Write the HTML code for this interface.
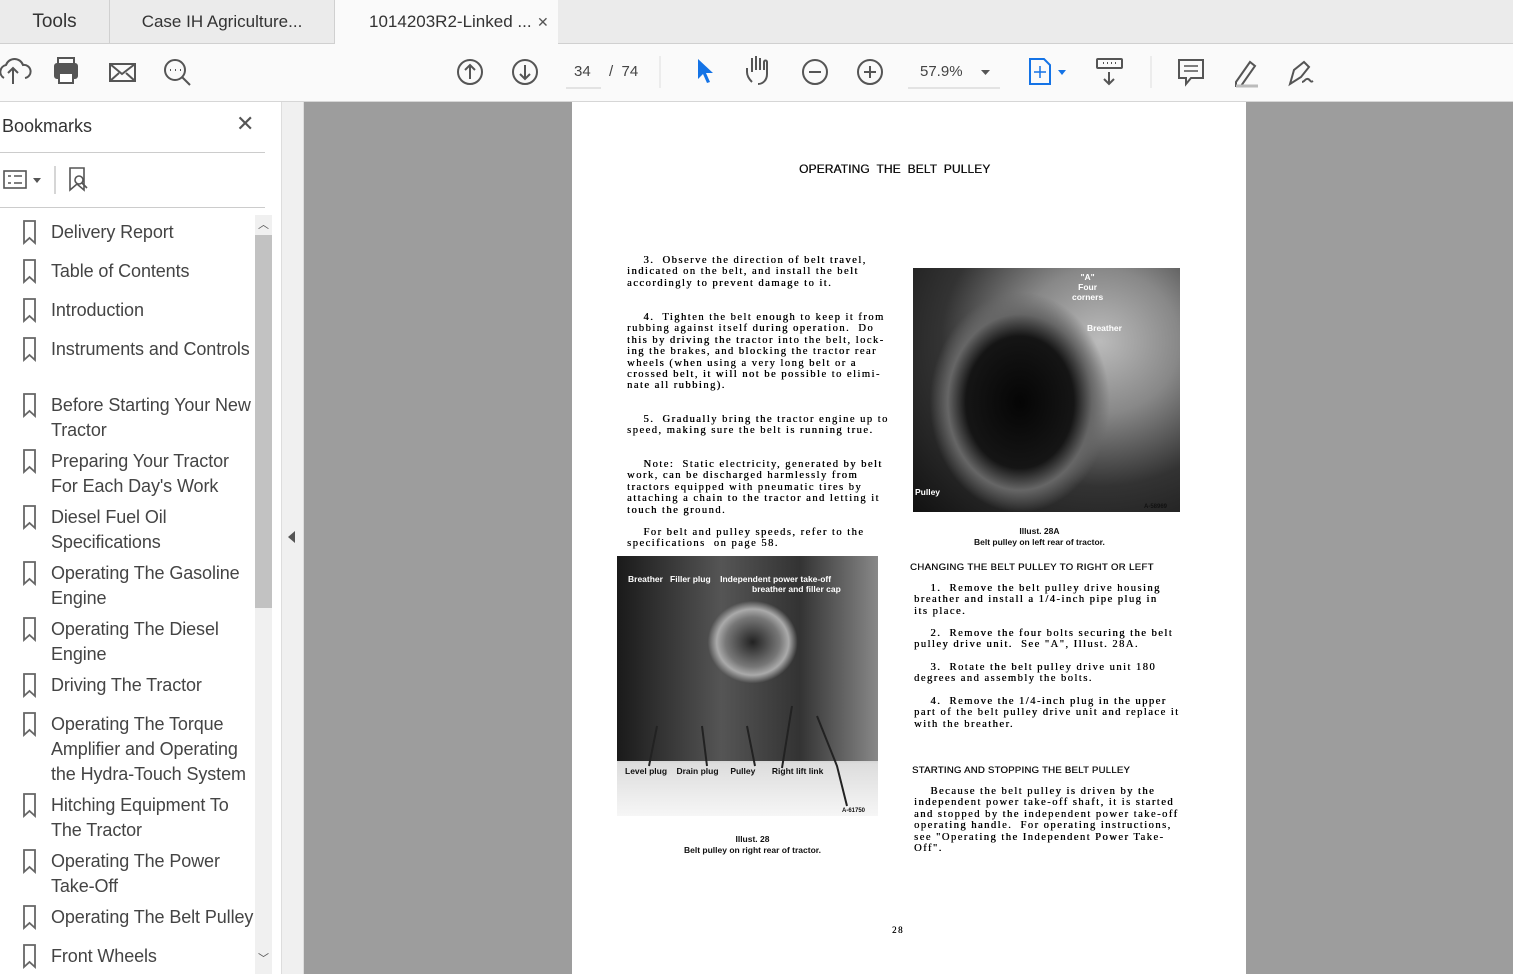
<!DOCTYPE html>
<html><head><meta charset="utf-8"><style>
*{margin:0;padding:0;box-sizing:border-box}
html,body{width:1513px;height:974px;overflow:hidden}
body{background:#9d9d9d;font-family:"Liberation Sans",sans-serif;position:relative}
.abs{position:absolute}
.tabs{left:0;top:0;width:1513px;height:44px;background:#ebebeb;border-bottom:1px solid #d0d0d0}
.tab{position:absolute;top:0;height:44px;font-size:17px;color:#333;line-height:44px}
.tb{left:0;top:44px;width:1513px;height:58px;background:#fafafa;border-bottom:1px solid #d6d6d6}
.side{left:0;top:102px;width:281px;height:872px;background:#fff;overflow:hidden}
.split{left:281px;top:102px;width:23px;height:872px;background:#f0f0f0;border-left:1px solid #ddd;border-right:1px solid #ddd}
.bm{position:absolute;left:51px;font-size:18px;color:#444;line-height:25px;letter-spacing:-.1px}
.page{left:572px;top:102px;width:674px;height:872px;background:#fff;overflow:hidden}
.t{position:absolute;font-family:"Liberation Serif",serif;font-size:10.6px;line-height:11.4px;color:#000;letter-spacing:1.45px;white-space:pre;text-shadow:0.3px 0 0 #000}
.s{position:absolute;font-family:"Liberation Sans",sans-serif;font-size:8.5px;font-weight:bold;color:#111;white-space:pre}
.photo{position:absolute}
</style></head><body>
<div class="abs tabs">
 <div class="tab" style="left:0;width:110px;text-align:center;border-right:1px solid #d0d0d0;font-size:19px">Tools</div>
 <div class="tab" style="left:110px;width:225px;text-align:center;border-right:1px solid #d0d0d0">Case IH Agriculture...</div>
 <div class="tab" style="left:335px;width:223px;background:#fafafa;height:45px;padding-left:34px">1014203R2-Linked ...</div>
 <div class="tab" style="left:537px;font-size:14px;color:#555">✕</div>
</div>
<div class="abs tb">
<svg width="1513" height="58" fill="none" stroke="#555" stroke-width="2">
 <path d="M4 34a7 7 0 0 1 2-13a9 9 0 0 1 17 0a6 6 0 0 1 2 13M13 40V24m-5 5l5-5 5 5"/>
 <rect x="55" y="20" width="22" height="14" rx="2" fill="#555"/><rect x="58" y="14" width="16" height="6"/><rect x="59" y="29" width="14" height="10" fill="#fff"/>
 <rect x="110" y="20" width="25" height="17"/><path d="M110 20l12 10 13-10M110 37l9-8M135 37l-9-8"/>
 <circle cx="175" cy="26" r="10"/><path d="M182 33l8 8"/><path d="M170 26h1M175 26h1M180 26h1" stroke-width="2"/>
 <circle cx="470" cy="28" r="12"/><path d="M470 35V21m-5 5l5-5 5 5"/>
 <circle cx="525" cy="28" r="12"/><path d="M525 21v14m-5-5l5 5 5-5"/>
 <path d="M566 44h35" stroke="#ccc" stroke-width="1"/>
 <path d="M660 12v32" stroke="#ddd" stroke-width="1"/>
 <path d="M698 15l0 20 5-5 4 9 3-1-4-9 7 0z" fill="#1473e6" stroke="none"/>
 <path d="M752 38c-4-4-5-8-5-10v-4m5 4V14m4 12V12m4 14V14m4 12v-8c0-2 3-2 3 0v12c0 6-4 10-9 10"/>
 <circle cx="815" cy="28" r="12"/><path d="M809 28h12"/>
 <circle cx="870" cy="28" r="12"/><path d="M864 28h12m-6-6v12"/>
 <path d="M908 44h92" stroke="#ccc" stroke-width="1"/>
 <path d="M981 26h9l-4.5 5z" fill="#555" stroke="none"/>
 <path d="M1030 15h14l6 6v19h-20z" stroke="#1473e6"/><path d="M1040 22v12m-6-6h12" stroke="#1473e6" stroke-width="1.5"/>
 <path d="M1058 26h8l-4 5z" fill="#1473e6" stroke="none"/>
 <rect x="1097" y="15" width="25" height="9" rx="1"/><path d="M1103 19h1M1107 19h1M1111 19h1M1115 19h1"/><path d="M1109 28v12m-5-5l5 5 5-5"/>
 <path d="M1151 12v32" stroke="#ddd" stroke-width="1"/>
 <path d="M1179 16h24v18h-12l-5 6v-6h-7z"/><path d="M1184 22h14M1184 27h14" stroke-width="1.5"/>
 <path d="M1236 38l14-20 5 4-14 20h-5z"/><path d="M1236 42h22" stroke="#bbb" stroke-width="3"/>
 <path d="M1290 40l4-14 10-8 5 5-8 10-11 7z"/><path d="M1302 38c3 0 3-4 6-3s2 4 5 2"/>
</svg>
<div class="abs" style="left:574px;top:19px;font-size:15px;color:#444">34</div>
<div class="abs" style="left:609px;top:19px;font-size:15px;color:#444">/ &nbsp;74</div>
<div class="abs" style="left:920px;top:19px;font-size:15px;color:#444">57.9%</div>
</div>
<div class="abs side">
 <div class="abs" style="left:2px;top:14px;font-size:18px;color:#333">Bookmarks</div>
 <div class="abs" style="left:236px;top:9px;font-size:22px;color:#555">✕</div>
 <div class="abs" style="left:0;top:50px;width:265px;height:1px;background:#ccc"></div>
 <svg class="abs" style="left:0;top:62px" width="100" height="32" fill="none" stroke="#555" stroke-width="1.6"><rect x="4" y="7" width="22" height="17"/><path d="M8 12h3M8 19h3M14 12h8M14 19h8"/><path d="M33 14h8l-4 5z" fill="#555" stroke="none"/><path d="M55 2v28" stroke="#ccc"/><path d="M70 4h14v22l-7-6-7 6z"/><circle cx="79" cy="16" r="4"/><path d="M82 19l5 5"/></svg>
 <div class="abs" style="left:0;top:105px;width:265px;height:1px;background:#ccc"></div>
 <div class="abs" style="left:255px;top:113px;width:17px;height:759px;background:#f0f0f0"></div>
 <div class="abs" style="left:255px;top:133px;width:17px;height:373px;background:#c2c2c2"></div>
 <div class="abs" style="left:258px;top:114px;font-size:11px;color:#555">︿</div>
 <div class="abs" style="left:258px;top:848px;font-size:11px;color:#555">﹀</div>
</div>
<svg class="abs" style="left:20px;top:220px" width="20" height="754" fill="none" stroke="#666" stroke-width="1.8">
<g id="b"><path d="M4 1h11v22l-5.5-5-5.5 5z"/></g>
<use href="#b" y="39"/><use href="#b" y="78"/><use href="#b" y="117"/><use href="#b" y="173"/><use href="#b" y="229"/><use href="#b" y="285"/><use href="#b" y="341"/><use href="#b" y="397"/><use href="#b" y="453"/><use href="#b" y="492"/><use href="#b" y="573"/><use href="#b" y="629"/><use href="#b" y="685"/><use href="#b" y="724"/>
</svg>
<div class="bm" style="top:220px">Delivery Report</div>
<div class="bm" style="top:259px">Table of Contents</div>
<div class="bm" style="top:298px">Introduction</div>
<div class="bm" style="top:337px">Instruments and Controls</div>
<div class="bm" style="top:393px">Before Starting Your New<br>Tractor</div>
<div class="bm" style="top:449px">Preparing Your Tractor<br>For Each Day's Work</div>
<div class="bm" style="top:505px">Diesel Fuel Oil<br>Specifications</div>
<div class="bm" style="top:561px">Operating The Gasoline<br>Engine</div>
<div class="bm" style="top:617px">Operating The Diesel<br>Engine</div>
<div class="bm" style="top:673px">Driving The Tractor</div>
<div class="bm" style="top:712px">Operating The Torque<br>Amplifier and Operating<br>the Hydra-Touch System</div>
<div class="bm" style="top:793px">Hitching Equipment To<br>The Tractor</div>
<div class="bm" style="top:849px">Operating The Power<br>Take-Off</div>
<div class="bm" style="top:905px">Operating The Belt Pulley</div>
<div class="bm" style="top:944px">Front Wheels</div>
<div class="abs split"><div class="abs" style="left:6px;top:429px;width:0;height:0;border-top:6px solid transparent;border-bottom:6px solid transparent;border-right:7px solid #555"></div></div>
<div class="abs page">
<div class="s" style="left:227px;top:60px;font-size:12px;font-weight:normal;letter-spacing:.1px;text-shadow:0.3px 0 0 #000">OPERATING  THE  BELT  PULLEY</div>
<div class="t" style="left:55px;top:153px">    3.  Observe the direction of belt travel,
indicated on the belt, and install the belt
accordingly to prevent damage to it.</div>
<div class="t" style="left:55px;top:210px">    4.  Tighten the belt enough to keep it from
rubbing against itself during operation.  Do
this by driving the tractor into the belt, lock-
ing the brakes, and blocking the tractor rear
wheels (when using a very long belt or a
crossed belt, it will not be possible to elimi-
nate all rubbing).</div>
<div class="t" style="left:55px;top:312px">    5.  Gradually bring the tractor engine up to
speed, making sure the belt is running true.</div>
<div class="t" style="left:55px;top:357px">    Note:  Static electricity, generated by belt
work, can be discharged harmlessly from
tractors equipped with pneumatic tires by
attaching a chain to the tractor and letting it
touch the ground.</div>
<div class="t" style="left:55px;top:425px">    For belt and pulley speeds, refer to the
specifications  on page 58.</div>
<div class="photo" style="left:341px;top:166px;width:267px;height:244px;background:radial-gradient(ellipse 90px 110px at 40% 55%,#050505 0,#151515 60%,#666 80%,transparent 100%),radial-gradient(ellipse at 70% 30%,#bbb 0,#888 30%,#333 60%,#111 100%)"></div>
<div class="s" style="left:500px;top:170px;color:#fff;text-align:center">"A"<br>Four<br>corners</div>
<div class="s" style="left:515px;top:221px;color:#fff">Breather</div>
<div class="s" style="left:343px;top:385px;color:#fff">Pulley</div>
<div class="s" style="left:572px;top:402px;font-size:6px">A-58969</div>
<div class="s" style="left:402px;top:424px;text-align:center;line-height:11px">Illust. 28A<br>Belt pulley on left rear of tractor.</div>
<div class="photo" style="left:45px;top:454px;width:261px;height:260px;background:linear-gradient(180deg,#333 0,#555 60%,#ddd 80%,#f6f6f6 100%)"></div>
<div class="photo" style="left:45px;top:454px;width:261px;height:205px;background:radial-gradient(ellipse 60px 55px at 52% 42%,#222 0,#777 45%,#aaa 60%,transparent 75%),linear-gradient(90deg,#1a1a1a,#555 40%,#333 70%,#888)"></div>
<svg class="abs" style="left:45px;top:454px" width="261" height="260" stroke="#222" stroke-width="2" fill="none"><path d="M40 170l-8 40M85 170l5 40M130 170l8 40M175 150l-10 62M200 160l20 50l10 40"/></svg>
<div class="s" style="left:56px;top:472px;color:#fff">Breather   Filler plug    Independent power take-off</div>
<div class="s" style="left:180px;top:482px;color:#fff">breather and filler cap</div>
<div class="s" style="left:53px;top:664px">Level plug    Drain plug     Pulley       Right lift link</div>
<div class="s" style="left:270px;top:706px;font-size:6px">A-61750</div>
<div class="s" style="left:112px;top:732px;text-align:center;line-height:11px">Illust. 28<br>Belt pulley on right rear of tractor.</div>
<div class="s" style="left:338px;top:460px;font-size:9.5px;font-weight:normal;letter-spacing:.4px;text-shadow:0.3px 0 0 #000">CHANGING THE BELT PULLEY TO RIGHT OR LEFT</div>
<div class="t" style="left:342px;top:481px">    1.  Remove the belt pulley drive housing
breather and install a 1/4-inch pipe plug in
its place.</div>
<div class="t" style="left:342px;top:526px">    2.  Remove the four bolts securing the belt
pulley drive unit.  See "A", Illust. 28A.</div>
<div class="t" style="left:342px;top:560px">    3.  Rotate the belt pulley drive unit 180
degrees and assembly the bolts.</div>
<div class="t" style="left:342px;top:594px">    4.  Remove the 1/4-inch plug in the upper
part of the belt pulley drive unit and replace it
with the breather.</div>
<div class="s" style="left:340px;top:663px;font-size:9.5px;font-weight:normal;letter-spacing:.3px;text-shadow:0.3px 0 0 #000">STARTING AND STOPPING THE BELT PULLEY</div>
<div class="t" style="left:342px;top:684px">    Because the belt pulley is driven by the
independent power take-off shaft, it is started
and stopped by the independent power take-off
operating handle.  For operating instructions,
see "Operating the Independent Power Take-
Off".</div>
<div class="t" style="left:320px;top:823px;font-size:9px">28</div>
</div>
</body></html>
